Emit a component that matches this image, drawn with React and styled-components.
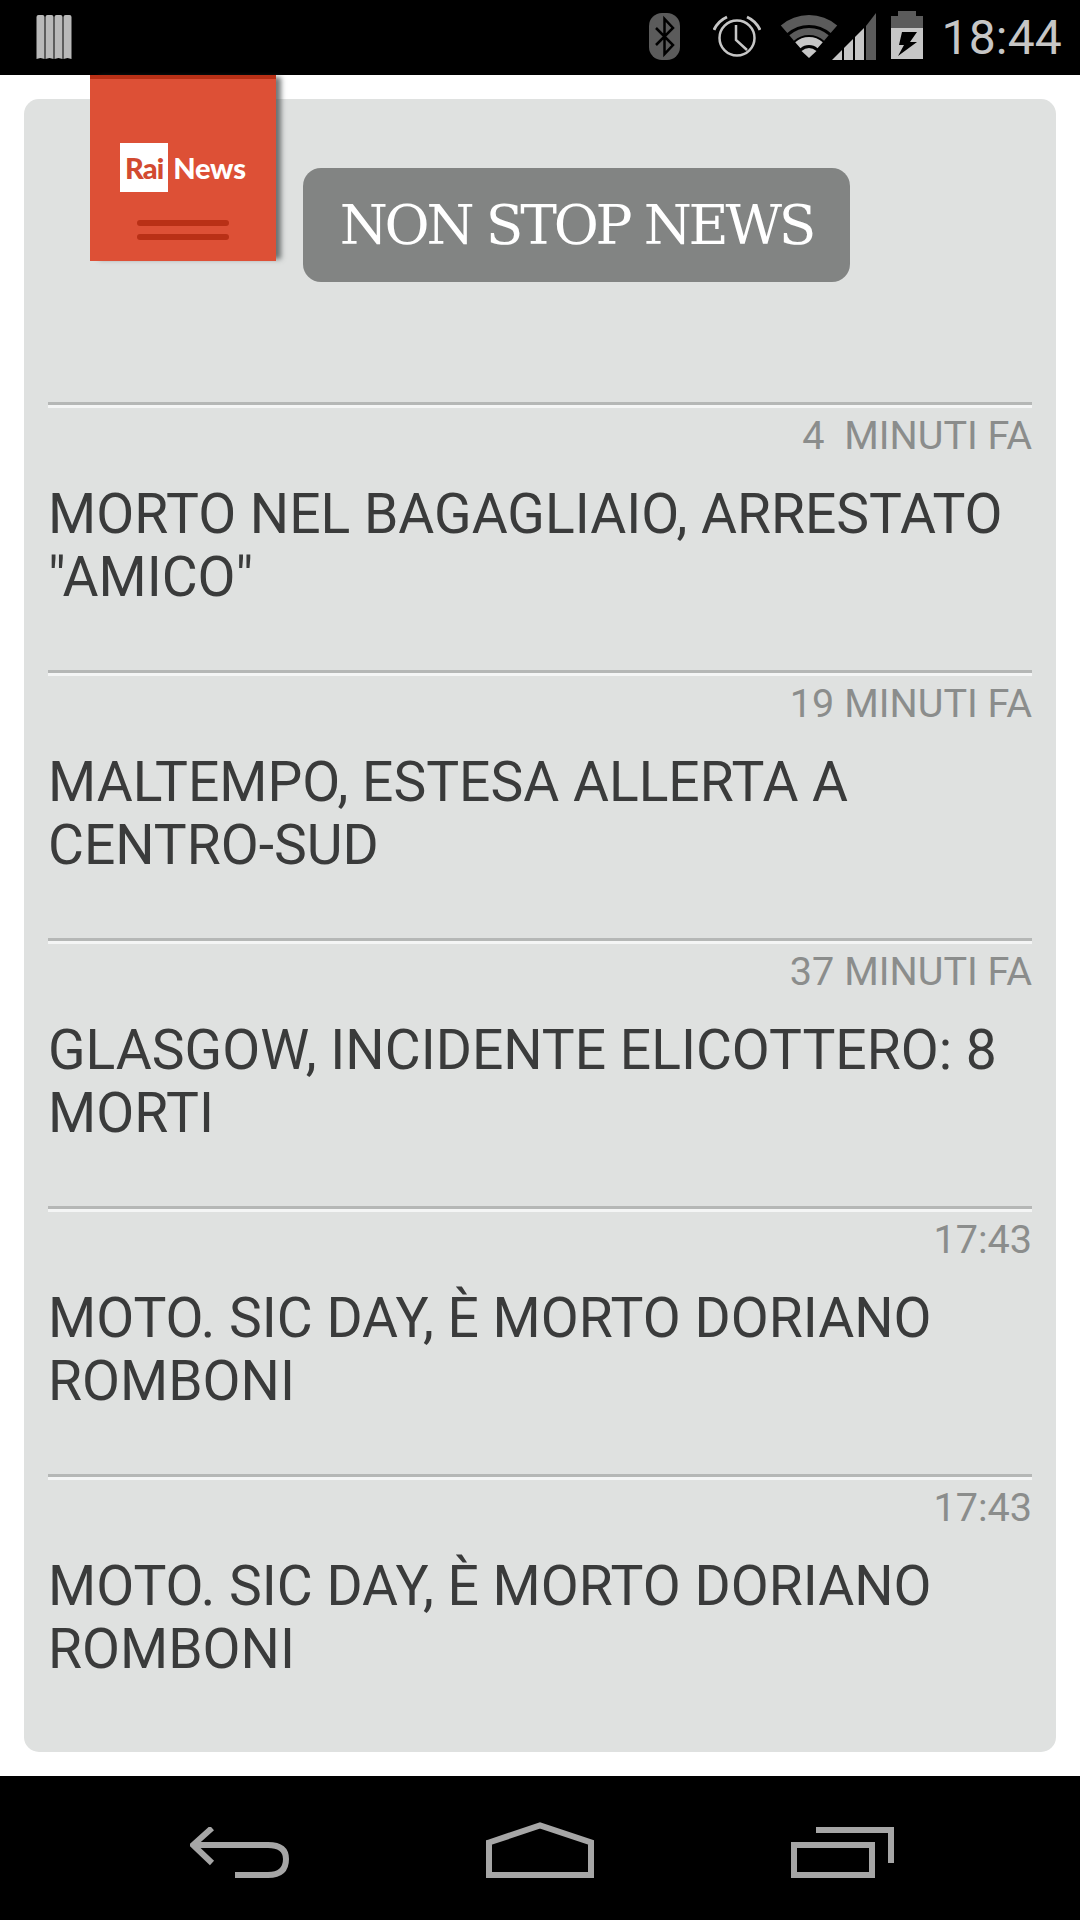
import React from "react";
import styled, { createGlobalStyle } from "styled-components";

const Global = createGlobalStyle`
  html, body { margin: 0; padding: 0; background: #fff; }
  * { box-sizing: border-box; }
`;

const Screen = styled.div`
  width: 1080px; height: 1920px; display: flex; flex-direction: column;
  background: #fff; font-family: Roboto, sans-serif; overflow: hidden;
`;
const StatusBar = styled.header`
  height: 75px; background: #000; display: flex; align-items: flex-start;
  justify-content: space-between; padding: 0 18px 0 36px; flex: none;
`;
const StatusGroup = styled.div`display: flex; align-items: flex-start;`;
const StatusIcon = styled.svg`display: block; flex: none; margin-left: ${p => p.$ml || 0}px;`;
const Clock = styled.span`
  font-size: 48px; line-height: 75px; color: #c6c6c6; margin-left: 18px; letter-spacing: .2px;
`;
const Main = styled.main`flex: 1; padding: 24px 24px 24px; min-height: 0;`;
const Card = styled.section`
  height: 1653px; background: #dfe1e0; border-radius: 15px; padding: 0 24px;
`;
const Header = styled.div`
  height: 303px; display: flex; align-items: flex-start;
  padding-left: 42px; gap: 27px;
`;
const Logo = styled.div`
  width: 186px; height: 186px; margin-top: -24px; background: #dd5036;
  border-top: 4px solid #b93016; box-shadow: 7px 0 5px -2px rgba(70,75,75,.75);
  display: flex; flex-direction: column; align-items: center; padding-top: 64px; flex: none;
`;
const Wordmark = styled.div`display: flex; align-items: center; gap: 5px;`;
const RaiBox = styled.span`
  width: 48px; height: 49px; background: #fff; color: #d24a30; font: 900 29px/49px Lato, sans-serif;
  text-align: center; letter-spacing: -.8px; flex: none;
`;
const NewsWord = styled.span`color: #fff; font: 900 29px/49px Lato, sans-serif; letter-spacing: -.2px;`;
const LogoLine = styled.span`
  width: 92px; height: 6px; border-radius: 3px; background: #b93016; margin-top: ${p => p.$mt}px;
`;
const Badge = styled.div`
  width: 547px; height: 114px; margin-top: 69px; background: #828483; border-radius: 18px;
  color: #fff; display: flex; align-items: center; justify-content: center;
  font-family: "DejaVu Serif", serif; font-size: 55px; letter-spacing: -3.2px; white-space: pre;
`;
const Item = styled.article`
  height: 268px; border-top: 3px solid #b5b7b6;
`;
const Sheen = styled.div`height: 3px; background: #f4f5f5;`;
const Time = styled.div`
  text-align: right; color: #8b8d8c; font-size: 39.600px; line-height: 42px; margin-top: 7px;
  white-space: pre;
`;
const Title = styled.h2`
  margin: 26px 0 0 0; color: #3a3b3b; font-size: 55.200px; font-weight: 400; line-height: 63px;
`;
const NavBar = styled.nav`
  height: 144px; background: #000; flex: none; display: flex; align-items: flex-end;
  padding: 0 0 42px 190px; gap: 197px;
`;
const NavIcon = styled.svg`display: block; flex: none;`;

const news = [
  ["4  MINUTI FA", 'MORTO NEL BAGAGLIAIO, ARRESTATO "AMICO"'],
  ["19 MINUTI FA", "MALTEMPO, ESTESA ALLERTA A CENTRO-SUD"],
  ["37 MINUTI FA", "GLASGOW, INCIDENTE ELICOTTERO: 8 MORTI"],
  ["17:43", "MOTO. SIC DAY, È MORTO DORIANO ROMBONI"],
  ["17:43", "MOTO. SIC DAY, È MORTO DORIANO ROMBONI"],
];

const arc = r => {
  const a = 41 * Math.PI / 180;
  const cx = 30, cy = 48;
  const dx = r * Math.sin(a), dy = r * Math.cos(a);
  return `M${cx - dx} ${cy - dy}A${r} ${r} 0 0 1 ${cx + dx} ${cy - dy}`;
};

const Bars = () => (
  <StatusIcon width="36" height="75" viewBox="0 0 36 75">
    {[0, 9, 18, 27].map(x => (
      <path key={x} d={`M${x + .5} 17q0-2 2-2h4q2 0 2 2v42l-4-1-4 1z`} fill="#b9b9b9" />
    ))}
  </StatusIcon>
);
const Bluetooth = () => (
  <StatusIcon width="31" height="75" viewBox="0 0 31 75">
    <rect x="0" y="13" width="31" height="47" rx="13" fill="#5b5b5b" />
    <path d="M7 28L24 45L15.500 54V19L24 28L7 45" fill="none" stroke="#000" strokeWidth="2.500" />
  </StatusIcon>
);
const Alarm = () => (
  <StatusIcon $ml={33} width="48" height="75" viewBox="0 0 48 75">
    <circle cx="24" cy="38" r="17.500" fill="none" stroke="#c6c6c6" strokeWidth="2.500" />
    <path d="M23 25V40L34 50" fill="none" stroke="#c6c6c6" strokeWidth="2.500" />
    <path d="M1 30Q5 21 14 17M34 17Q43 21 47 30" fill="none" stroke="#c6c6c6" strokeWidth="3" />
  </StatusIcon>
);
const WifiSignal = () => (
  <StatusIcon $ml={18} width="97" height="75" viewBox="0 0 97 75">
    <g transform="translate(0 10)" fill="none">
      <path d={arc(38)} stroke="#5b5b5b" strokeWidth="10" />
      <path d={arc(26.500)} stroke="#5b5b5b" strokeWidth="7" />
      <path d={arc(17)} stroke="#c6c6c6" strokeWidth="8" />
      <path d="M22.500 41Q30 35 37.500 41L30 48z" fill="#c6c6c6" />
    </g>
    <path d="M53 60L63 50V60z" fill="#c6c6c6" />
    <path d="M65 48L74 39V60H65z" fill="#c6c6c6" />
    <path d="M76 37L85 28V60H76z" fill="#c6c6c6" />
    <path d="M87 26L97 13V60H87z" fill="#5b5b5b" />
  </StatusIcon>
);
const Battery = () => (
  <StatusIcon $ml={15} width="32" height="75" viewBox="0 0 32 75">
    <path d="M7 11H25V16H32V28H0V16H7z" fill="#5b5b5b" />
    <rect x="0" y="28" width="32" height="31" fill="#c6c6c6" />
    <path d="M11 32H26L19 42H26L7 56L13 45H8z" fill="#000" />
  </StatusIcon>
);

const Back = () => (
  <NavIcon width="99" height="51" viewBox="0 0 99 51">
    <path d="M22 1L3 18L22 36M3 18H78Q96 18 96 32Q96 48 78 48H45" fill="none" stroke="#a6a6a6" strokeWidth="6" />
  </NavIcon>
);
const Home = () => (
  <NavIcon width="108" height="56" viewBox="0 0 108 56">
    <path d="M3 20.500L54 3.500L105 20.500V53H3z" fill="none" stroke="#a6a6a6" strokeWidth="6" />
  </NavIcon>
);
const Recents = () => (
  <NavIcon width="103" height="51" viewBox="0 0 103 51">
    <rect x="3" y="18" width="78" height="30" fill="none" stroke="#a6a6a6" strokeWidth="6" />
    <path d="M25 3H100V36" fill="none" stroke="#a6a6a6" strokeWidth="6" />
  </NavIcon>
);

export default function App() {
  return (
    <Screen>
      <Global />
      <StatusBar>
        <Bars />
        <StatusGroup>
          <Bluetooth />
          <Alarm />
          <WifiSignal />
          <Battery />
          <Clock>18:44</Clock>
        </StatusGroup>
      </StatusBar>
      <Main>
        <Card>
          <Header>
            <Logo>
              <Wordmark>
                <RaiBox>Rai</RaiBox>
                <NewsWord>News</NewsWord>
              </Wordmark>
              <LogoLine $mt={28} />
              <LogoLine $mt={8} />
            </Logo>
            <Badge>NON STOP NEWS</Badge>
          </Header>
          {news.map(([time, title], i) => (
            <Item key={i}>
              <Sheen />
              <Time>{time}</Time>
              <Title>{title}</Title>
            </Item>
          ))}
        </Card>
      </Main>
      <NavBar>
        <Back />
        <Home />
        <Recents />
      </NavBar>
    </Screen>
  );
}
